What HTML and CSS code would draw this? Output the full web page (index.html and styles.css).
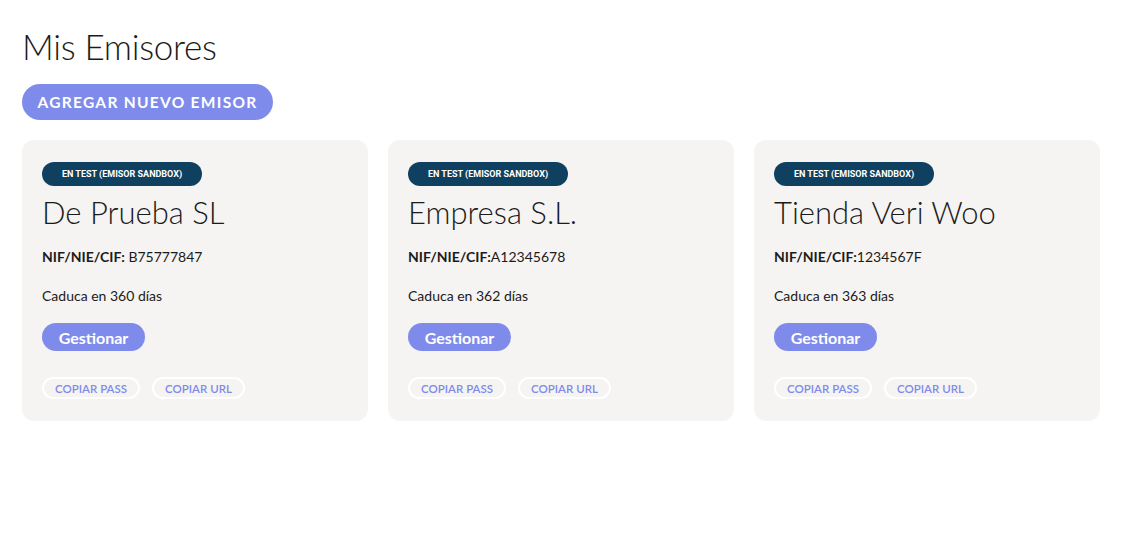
FILE: index.html
```html
<!DOCTYPE html>
<html lang="es">
<head>
  <meta charset="UTF-8">
  <meta name="viewport" content="width=device-width, initial-scale=1.0">
  <title>Mis Emisores</title>
  <link rel="stylesheet" href="styles.css">
</head>
<body>
  <div class="page">
    <h1 class="title">Mis Emisores</h1>
    <button class="btn-add">Agregar nuevo emisor</button>

    <div class="cards">
      <div class="card">
        <span class="badge">EN TEST (EMISOR SANDBOX)</span>
        <h2 class="card-name">De Prueba SL</h2>
        <p class="nif"><b>NIF/NIE/CIF:</b> B75777847</p>
        <p class="expire">Caduca en 360 días</p>
        <button class="btn-manage">Gestionar</button>
        <div class="copy-row">
          <button class="btn-copy">COPIAR PASS</button>
          <button class="btn-copy">COPIAR URL</button>
        </div>
      </div>

      <div class="card">
        <span class="badge">EN TEST (EMISOR SANDBOX)</span>
        <h2 class="card-name">Empresa S.L.</h2>
        <p class="nif"><b>NIF/NIE/CIF:</b>A12345678</p>
        <p class="expire">Caduca en 362 días</p>
        <button class="btn-manage">Gestionar</button>
        <div class="copy-row">
          <button class="btn-copy">COPIAR PASS</button>
          <button class="btn-copy">COPIAR URL</button>
        </div>
      </div>

      <div class="card">
        <span class="badge">EN TEST (EMISOR SANDBOX)</span>
        <h2 class="card-name">Tienda Veri Woo</h2>
        <p class="nif"><b>NIF/NIE/CIF:</b>1234567F</p>
        <p class="expire">Caduca en 363 días</p>
        <button class="btn-manage">Gestionar</button>
        <div class="copy-row">
          <button class="btn-copy">COPIAR PASS</button>
          <button class="btn-copy">COPIAR URL</button>
        </div>
      </div>
    </div>
  </div>
</body>
</html>
```

FILE: styles.css
```css
* {
  padding: 0;
  margin: 0;
  box-sizing: border-box;
}

body {
  background: #fff;
  color: #1b1b1b;
  font-family: "Lato", "Open Sans", sans-serif;
}

.page {
  padding: 26px 22px;
}

.title {
  font-size: 35px;
  font-weight: 300;
  line-height: 40px;
  letter-spacing: -0.3px;
  color: #1b1b1b;
}

.btn-add {
  display: block;
  margin-top: 18px;
  height: 36px;
  width: 251px;
  border: 0;
  border-radius: 18px;
  background: #7f8beb;
  color: #fff;
  font-family: "Lato", sans-serif;
  font-size: 15.5px;
  font-weight: 700;
  letter-spacing: 1.3px;
  text-transform: uppercase;
}

.cards {
  display: flex;
  gap: 20px;
  margin-top: 20px;
}

.card {
  width: 346px;
  height: 281px;
  padding: 22px 20px 20px;
  background: #f5f4f2;
  border-radius: 12px;
}

.badge {
  display: block;
  width: 160px;
  height: 24px;
  line-height: 24px;
  border-radius: 12px;
  background: #0f4060;
  color: #fff;
  font-family: "Roboto", sans-serif;
  font-size: 9px;
  font-weight: 700;
  text-align: center;
}

.card-name {
  margin-top: 6px;
  font-size: 31px;
  font-weight: 300;
  line-height: 40px;
  color: #1b1b1b;
}

.nif {
  margin-top: 15px;
  font-size: 14px;
  line-height: 20px;
}

.nif b {
  font-weight: 700;
}

.expire {
  margin-top: 19px;
  font-size: 14px;
  line-height: 20px;
}

.btn-manage {
  display: block;
  margin-top: 17px;
  width: 103px;
  height: 28px;
  border: 0;
  border-radius: 14px;
  background: #7f8beb;
  color: #fff;
  font-family: "Lato", sans-serif;
  font-size: 16px;
  font-weight: 700;
}

.copy-row {
  display: flex;
  gap: 12px;
  margin-top: 26px;
}

.btn-copy {
  height: 22px;
  padding: 0 11px;
  border: 2px solid #fff;
  border-radius: 11px;
  background: transparent;
  color: #7f8beb;
  font-family: "Lato", sans-serif;
  font-size: 11.5px;
  font-weight: 600;
}
```
